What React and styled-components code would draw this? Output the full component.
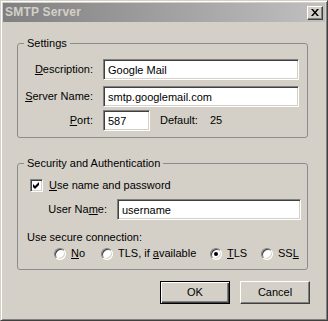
import React from 'react';
import styled, { createGlobalStyle } from 'styled-components';

const GlobalStyle = createGlobalStyle`
  html, body { margin: 0; padding: 0; background: #d4d0c8; }
  body {
    font-family: "Liberation Sans", Arial, sans-serif;
    font-size: 11px;
    line-height: 13px;
    color: #000;
  }
  * { box-sizing: border-box; }
`;

const Window = styled.div`
  width: 328px;
  height: 321px;
  border: 1px solid;
  border-color: #d4d0c8 #404040 #404040 #d4d0c8;
  box-shadow: inset 1px 1px #fff, inset -1px -1px #808080;
  padding: 2px;
  background: #d4d0c8;
  display: flex;
  flex-direction: column;
`;

const TitleBar = styled.div`
  height: 19px;
  flex: none;
  display: flex;
  align-items: center;
  justify-content: space-between;
  padding: 0 2px 0 2px;
  background: linear-gradient(to right, #808080, #c0c0c0);
`;

const Title = styled.span`
  font-weight: bold;
  font-size: 12px;
  letter-spacing: 0.2px;
  color: #d4d0c8;
`;

const CaptionButton = styled.div`
  width: 16px;
  height: 14px;
  background: #d4d0c8;
  border: 1px solid;
  border-color: #fff #404040 #404040 #fff;
  box-shadow: inset -1px -1px #808080;
  display: flex;
  align-items: center;
  justify-content: center;
`;

const Client = styled.div`
  flex: 1;
  padding: 15px 0 0 14px;
`;

const Group = styled.fieldset`
  margin: ${p => p.$mt || 0}px 0 0 0;
  padding: 0;
  width: 291px;
  border: 1px solid #8c8c8c;
  border-radius: 3px;
  min-inline-size: 0;
`;

const Legend = styled.legend`
  margin-left: 6px;
  padding: 0 3px;
  line-height: 13px;
`;

const GroupBody = styled.div`
  padding: ${p => p.$pad};
`;

const FormRow = styled.div`
  display: grid;
  grid-template-columns: ${p => p.$label}px auto;
  column-gap: 10px;
  align-items: center;
  margin-top: ${p => p.$mt || 0}px;
`;

const Label = styled.label`
  text-align: right;
  white-space: nowrap;
`;

const Key = styled.span`
  text-decoration: underline;
`;

const TextBox = styled.input`
  width: ${p => p.$w}px;
  height: 21px;
  margin: 0;
  padding: 0 0 0 4px;
  font: inherit;
  color: #000;
  background: #fff;
  border: 1px solid;
  border-color: #808080 #fff #fff #808080;
  box-shadow: inset 1px 1px #404040, inset -1px -1px #d4d0c8;
  outline: none;
`;

const Inline = styled.div`
  display: flex;
  align-items: center;
`;

const Note = styled.span`
  margin-left: ${p => p.$ml}px;
`;

const CheckRow = styled.div`
  display: flex;
  align-items: center;
  gap: 6px;
  padding-left: ${p => p.$pl}px;
`;

const CheckBox = styled.div`
  width: 13px;
  height: 13px;
  background: #fff;
  border: 1px solid;
  border-color: #808080 #fff #fff #808080;
  box-shadow: inset 1px 1px #404040, inset -1px -1px #d4d0c8;
  display: flex;
  align-items: center;
  justify-content: center;
`;

const Caption = styled.div`
  padding-left: ${p => p.$pl}px;
  margin-top: ${p => p.$mt}px;
`;

const RadioRow = styled.div`
  display: grid;
  grid-template-columns: 47px 109px 51px auto;
  padding-left: 36px;
  margin-top: ${p => p.$mt}px;
`;

const RadioItem = styled.div`
  display: flex;
  align-items: center;
  gap: 5px;
  white-space: nowrap;
`;

const RadioCircle = styled.div`
  width: 12px;
  height: 12px;
  border-radius: 50%;
  background: #fff;
  border: 1px solid;
  border-color: #808080 #fff #fff #808080;
  box-shadow: inset 1px 1px #404040, inset -1px -1px #d4d0c8;
  display: flex;
  align-items: center;
  justify-content: center;
  &::after {
    content: "";
    width: 4px;
    height: 4px;
    border-radius: 50%;
    background: ${p => (p.$on ? '#000' : 'transparent')};
  }
`;

const ButtonRow = styled.div`
  display: flex;
  gap: 10px;
  padding-left: 143px;
  margin-top: 11px;
`;

const Button = styled.button`
  width: 70px;
  height: 23px;
  margin: 0;
  padding: 0;
  font: inherit;
  color: #000;
  background: #d4d0c8;
  border: 1px solid;
  border-color: ${p => (p.$default ? '#000' : '#fff #404040 #404040 #fff')};
  box-shadow: ${p =>
    p.$default
      ? 'inset 1px 1px #fff, inset -1px -1px #404040, inset -2px -2px #808080'
      : 'inset -1px -1px #808080'};
`;

const CloseGlyph = () => (
  <svg width="8" height="7" viewBox="0 0 8 7">
    <path d="M0 0h2l2 2.4L6 0h2L5 3.5L8 7H6L4 4.6L2 7H0l3-3.5z" fill="#000" />
  </svg>
);

const CheckGlyph = () => (
  <svg width="7" height="7" viewBox="0 0 7 7">
    <path d="M0 2L2 4L6 0V3L2 7L0 5Z" fill="#000" />
  </svg>
);

const Radio = ({ on, children }) => (
  <RadioItem>
    <RadioCircle $on={on} />
    <span>{children}</span>
  </RadioItem>
);

export default function App() {
  return (
    <>
      <GlobalStyle />
      <Window>
        <TitleBar>
          <Title>SMTP Server</Title>
          <CaptionButton>
            <CloseGlyph />
          </CaptionButton>
        </TitleBar>
        <Client>
          <Group>
            <Legend>Settings</Legend>
            <GroupBody $pad="9px 0 6px 0">
              <FormRow $label={75}>
                <Label><Key>D</Key>escription:</Label>
                <TextBox $w={196} defaultValue="Google Mail" />
              </FormRow>
              <FormRow $label={75} $mt={6}>
                <Label><Key>S</Key>erver Name:</Label>
                <TextBox $w={196} defaultValue="smtp.googlemail.com" />
              </FormRow>
              <FormRow $label={75} $mt={3}>
                <Label><Key>P</Key>ort:</Label>
                <Inline>
                  <TextBox $w={47} defaultValue="587" />
                  <Note $ml={10}>Default:</Note>
                  <Note $ml={12}>25</Note>
                </Inline>
              </FormRow>
            </GroupBody>
          </Group>
          <Group $mt={19}>
            <Legend>Security and Authentication</Legend>
            <GroupBody $pad="9px 0 9px 0">
              <CheckRow $pl={12}>
                <CheckBox>
                  <CheckGlyph />
                </CheckBox>
                <span><Key>U</Key>se name and password</span>
              </CheckRow>
              <FormRow $label={89} $mt={7}>
                <Label>User Na<Key>m</Key>e:</Label>
                <TextBox $w={184} defaultValue="username" />
              </FormRow>
              <Caption $pl={9} $mt={11}>Use secure connection:</Caption>
              <RadioRow $mt={3}>
                <Radio><Key>N</Key>o</Radio>
                <Radio>TLS, if <Key>a</Key>vailable</Radio>
                <Radio on><Key>T</Key>LS</Radio>
                <Radio>SS<Key>L</Key></Radio>
              </RadioRow>
            </GroupBody>
          </Group>
          <ButtonRow>
            <Button $default>OK</Button>
            <Button>Cancel</Button>
          </ButtonRow>
        </Client>
      </Window>
    </>
  );
}
